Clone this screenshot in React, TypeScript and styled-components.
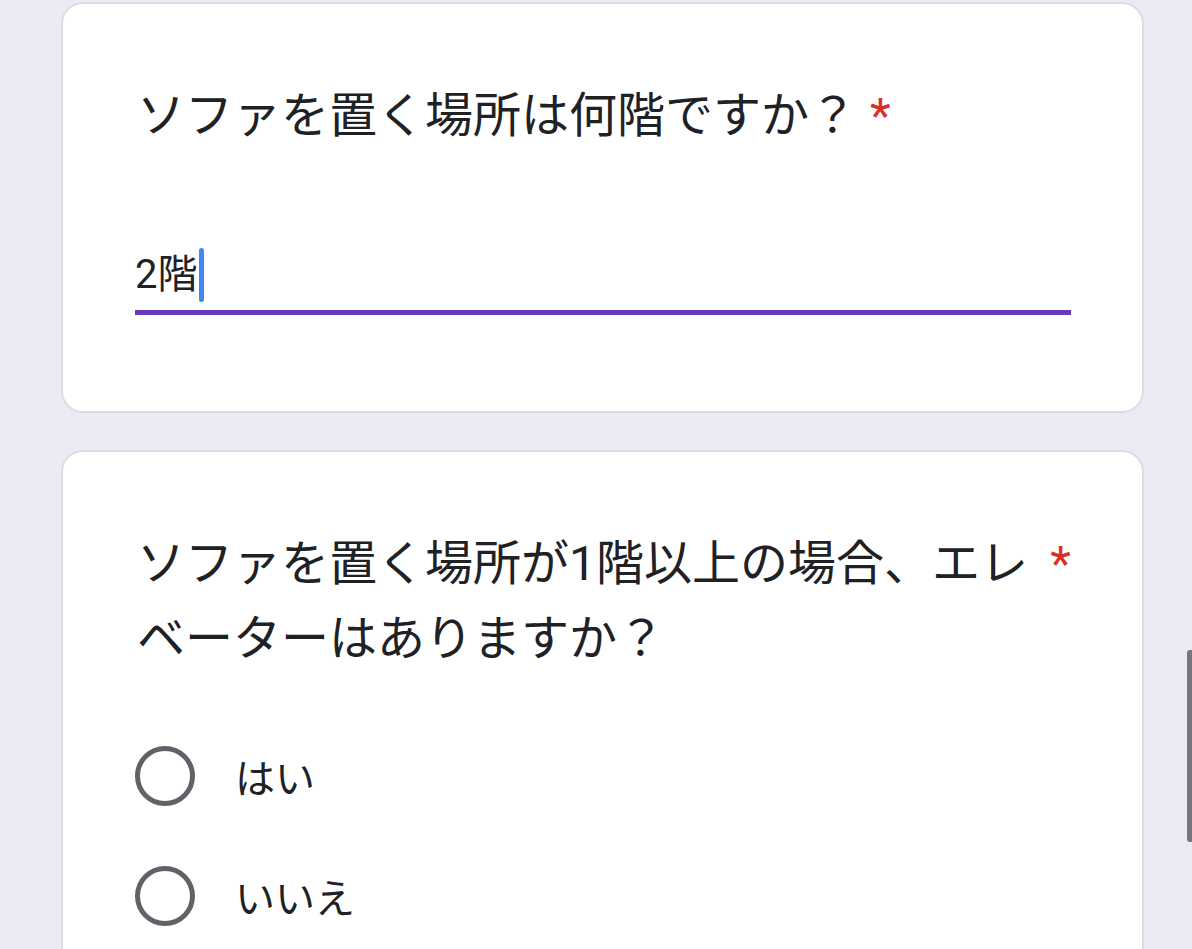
import React, { FC } from "react";
import styled, { createGlobalStyle } from "styled-components";

const GlobalStyle = createGlobalStyle`
  html, body {
    margin: 0;
    padding: 0;
    background: #edeaf5;
    overflow: hidden;
  }
  body {
    font-family: Roboto, "Noto Sans CJK JP", sans-serif;
    color: #202124;
  }
`;

const Page = styled.main`
  display: flex;
  flex-direction: column;
  gap: 37px;
  width: 1144px;
  padding: 2px 0 0 61px;
  min-height: 949px;
  box-sizing: border-box;
`;

const Card = styled.section<{ $bottom: number }>`
  background: #fff;
  border: 2px solid #dadce0;
  border-radius: 22px;
  padding: 74px 71px ${(p) => p.$bottom}px 72px;
`;

const Title = styled.div`
  display: flex;
  align-items: flex-start;
  gap: 13px;
  font-size: 48px;
  line-height: 75px;
  font-family: Roboto, "Noto Sans CJK JP", sans-serif;
`;

const TitleText = styled.span`
  flex: 0 1 auto;
  padding-left: 2px;
`;

const Required = styled.span`
  color: #d93025;
  font-family: Roboto, sans-serif;
  flex: none;
`;

const Field = styled.div`
  margin-top: 95px;
  padding-bottom: 8px;
  border-bottom: 5px solid #673ab7;
  display: flex;
  align-items: center;
  font-size: 40px;
  line-height: 54px;
  height: 54px;
`;

const Caret = styled.span`
  display: inline-block;
  width: 5px;
  height: 54px;
  margin-left: 2px;
  border-radius: 3px;
  background: #4285f4;
`;

const Options = styled.div`
  display: flex;
  flex-direction: column;
  gap: 60px;
  margin-top: 70px;
`;

const Option = styled.label`
  display: flex;
  align-items: center;
  gap: 40px;
  font-size: 40px;
  height: 60px;
`;

const Radio = styled.span`
  width: 60px;
  height: 60px;
  box-sizing: border-box;
  border: 5px solid #5f6368;
  border-radius: 50%;
  flex: none;
`;

const ScrollThumb = styled.div`
  position: fixed;
  right: 0;
  top: 650px;
  width: 5px;
  height: 192px;
  border-radius: 3px 0 0 3px;
  background: #77757e;
`;

const App: FC = () => (
  <>
    <GlobalStyle />
    <Page>
      <Card $bottom={96}>
        <Title>
          <TitleText>ソファを置く場所は何階ですか？</TitleText>
          <Required>*</Required>
        </Title>
        <Field>
          2階
          <Caret />
        </Field>
      </Card>
      <Card $bottom={80}>
        <Title>
          <TitleText>
            ソファを置く場所が1階以上の場合、エレベーターはありますか？
          </TitleText>
          <Required>*</Required>
        </Title>
        <Options>
          <Option>
            <Radio />
            はい
          </Option>
          <Option>
            <Radio />
            いいえ
          </Option>
        </Options>
      </Card>
    </Page>
    <ScrollThumb />
  </>
);

export default App;
